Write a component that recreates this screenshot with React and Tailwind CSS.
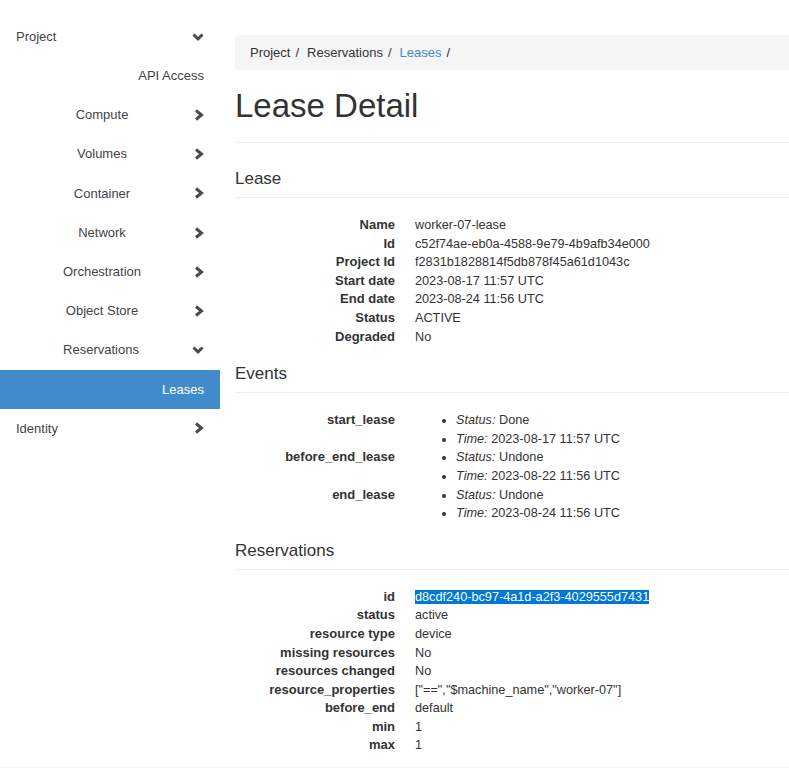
import React from 'react';

const ChevronRight = () => (
  <svg width="10" height="12" viewBox="0 0 10 12" className="shrink-0">
    <polyline points="2,1.5 7.5,6 2,10.5" fill="none" stroke="#4a4a4a" strokeWidth="3" strokeLinejoin="miter" />
  </svg>
);

const ChevronDown = () => (
  <svg width="12" height="10" viewBox="0 0 12 10" className="shrink-0">
    <polyline points="1.5,2.5 6,7 10.5,2.5" fill="none" stroke="#4a4a4a" strokeWidth="3" strokeLinejoin="miter" />
  </svg>
);

const navItems = [
  { label: 'API Access', type: 'link' },
  { label: 'Compute', type: 'group' },
  { label: 'Volumes', type: 'group' },
  { label: 'Container', type: 'group' },
  { label: 'Network', type: 'group' },
  { label: 'Orchestration', type: 'group' },
  { label: 'Object Store', type: 'group' },
  { label: 'Reservations', type: 'open' },
];

const leaseRows = [
  ['Name', 'worker-07-lease'],
  ['Id', 'c52f74ae-eb0a-4588-9e79-4b9afb34e000'],
  ['Project Id', 'f2831b1828814f5db878f45a61d1043c'],
  ['Start date', '2023-08-17 11:57 UTC'],
  ['End date', '2023-08-24 11:56 UTC'],
  ['Status', 'ACTIVE'],
  ['Degraded', 'No'],
];

const events = [
  ['start_lease', 'Done', '2023-08-17 11:57 UTC'],
  ['before_end_lease', 'Undone', '2023-08-22 11:56 UTC'],
  ['end_lease', 'Undone', '2023-08-24 11:56 UTC'],
];

const reservationRows = [
  ['status', 'active'],
  ['resource type', 'device'],
  ['missing resources', 'No'],
  ['resources changed', 'No'],
  ['resource_properties', '["==","$machine_name","worker-07"]'],
  ['before_end', 'default'],
  ['min', '1'],
  ['max', '1'],
];

const SectionTitle = ({ children }) => (
  <h4 className="text-[17px] leading-[19px] text-[#333] pb-[9px] border-b border-[#eee]">{children}</h4>
);

const Row = ({ label, children }) => (
  <div className="flex">
    <dt className="w-[160px] shrink-0 text-right font-bold text-[13px]">{label}</dt>
    <dd className="ml-[20px]">{children}</dd>
  </div>
);

const App = () => {
  return (
    <div className="w-full min-h-[768px] bg-white text-[#333] font-['Liberation_Sans',Arial,sans-serif] overflow-hidden">
      <div className="flex">
        {/* sidebar */}
        <nav className="w-[220px] shrink-0 pt-[17px] text-[13px] text-[#444]">
          <div className="h-[39.2px] flex items-center pl-4 pr-4">
            <span className="flex-1">Project</span>
            <ChevronDown />
          </div>
          {navItems.map(item => (
            <div key={item.label} className="h-[39.2px] flex items-center pr-4">
              {item.type === 'link' ? (
                <span className="flex-1 text-right">{item.label}</span>
              ) : (
                <>
                  <span className="flex-1 text-center pl-[10px]">{item.label}</span>
                  {item.type === 'open' ? <ChevronDown /> : <ChevronRight />}
                </>
              )}
            </div>
          ))}
          <div className="h-[39.2px] flex items-center justify-end pr-4 bg-[#428bca] text-white">Leases</div>
          <div className="h-[39.2px] flex items-center pl-4 pr-4">
            <span className="flex-1">Identity</span>
            <ChevronRight />
          </div>
        </nav>

        {/* main */}
        <main className="w-[600px] shrink-0 pl-[15px] pt-[35px] pb-[12px] text-[12.7px] leading-[18.6px]">
          <ol className="h-[35px] flex items-center px-[15px] pt-px bg-[#f5f5f5] rounded text-[13px]">
            <li>Project</li>
            <li className="px-[5px] text-[#333]">/</li>
            <li className="pl-[3px]">Reservations</li>
            <li className="px-[5px] text-[#333]">/</li>
            <li className="pl-[3px] text-[#428bca]">Leases</li>
            <li className="px-[5px] text-[#333]">/</li>
          </ol>

          <div className="mt-[18px] pb-[18px] border-b border-[#eee]">
            <h1 className="text-[33px] leading-[36px] text-[#333]">Lease Detail</h1>
          </div>

          <div className="mt-[26px]">
            <SectionTitle>Lease</SectionTitle>
            <dl className="mt-[18px]">
              {leaseRows.map(([k, v]) => (
                <Row key={k} label={k}>{v}</Row>
              ))}
            </dl>
          </div>

          <div className="mt-[18px]">
            <SectionTitle>Events</SectionTitle>
            <dl className="mt-[18px]">
              {events.map(([name, status, time]) => (
                <Row key={name} label={name}>
                  <ul className="list-disc pl-[41px] -ml-[41px] translate-x-[41px]">
                    <li><em>Status:</em> {status}</li>
                    <li><em>Time:</em> {time}</li>
                  </ul>
                </Row>
              ))}
            </dl>
          </div>

          <div className="mt-[18px]">
            <SectionTitle>Reservations</SectionTitle>
            <dl className="mt-[18px]">
              <Row label="id">
                <span className="bg-[#0078d7] text-white">d8cdf240-bc97-4a1d-a2f3-4029555d7431</span>
              </Row>
              {reservationRows.map(([k, v]) => (
                <Row key={k} label={k}>{v}</Row>
              ))}
            </dl>
          </div>
        </main>
      </div>
      <div className="h-[12px] bg-[#f5f5f5]" />
    </div>
  );
};

export default App;
